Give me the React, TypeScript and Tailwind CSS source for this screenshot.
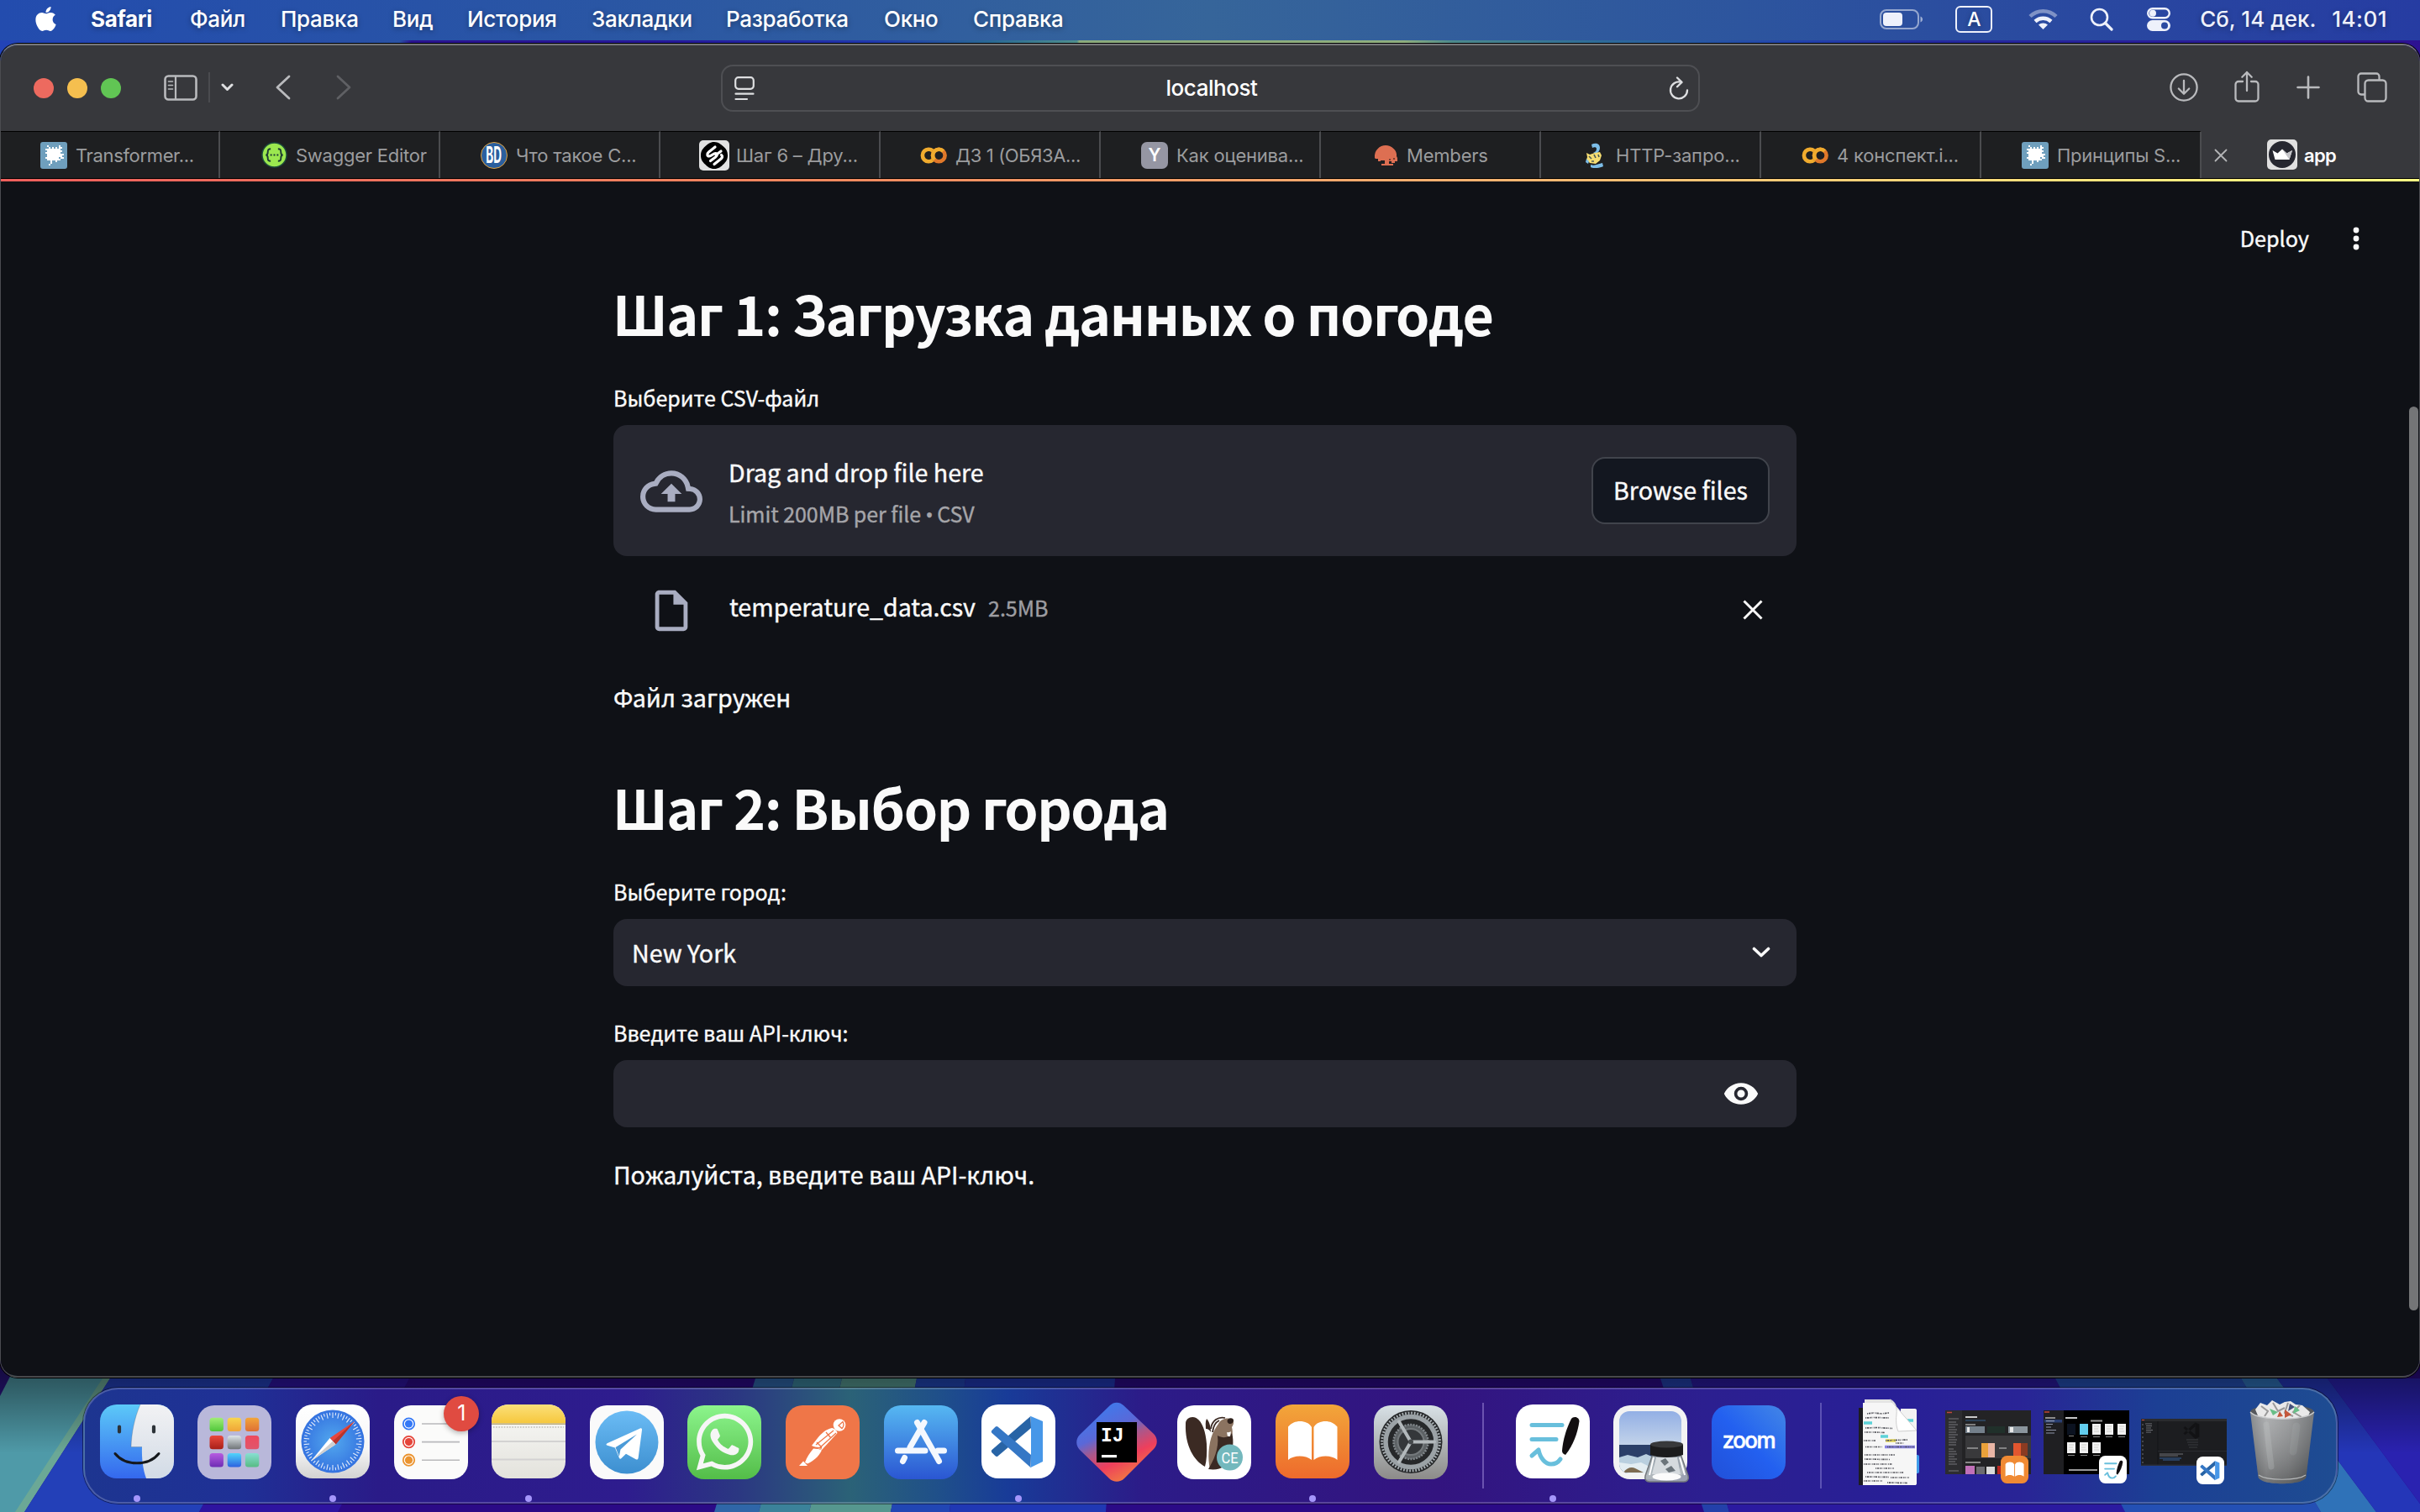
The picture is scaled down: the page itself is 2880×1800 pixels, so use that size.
import type { ReactNode } from 'react';
import { FaApple, FaWhatsapp } from 'react-icons/fa';

/* ---------- desktop ---------- */

function Wallpaper() {
  return (
    <svg className="absolute inset-0 h-full w-full" viewBox="0 0 2880 1800" preserveAspectRatio="none">
      <defs>
        <linearGradient id="wpTop" x1="0" x2="1" y1="0" y2="0">
          <stop offset="0" stopColor="#2243b8" />
          <stop offset="0.165" stopColor="#2a52a4" />
          <stop offset="0.17" stopColor="#2a128e" />
          <stop offset="0.28" stopColor="#25189a" />
          <stop offset="0.36" stopColor="#2038ae" />
          <stop offset="0.41" stopColor="#2a6a94" />
          <stop offset="0.445" stopColor="#4f8f8e" />
          <stop offset="0.446" stopColor="#8bab7c" />
          <stop offset="0.58" stopColor="#8fae7e" />
          <stop offset="0.6" stopColor="#4d8a8c" />
          <stop offset="0.66" stopColor="#2e6c98" />
          <stop offset="0.74" stopColor="#2244ae" />
          <stop offset="0.8" stopColor="#252aa0" />
          <stop offset="1" stopColor="#2d1191" />
        </linearGradient>
        <linearGradient id="wpShade" x1="0" x2="0" y1="0" y2="1">
          <stop offset="0" stopColor="#000" stopOpacity="0.62" />
          <stop offset="0.45" stopColor="#000" stopOpacity="0.35" />
          <stop offset="1" stopColor="#000" stopOpacity="0" />
        </linearGradient>
      </defs>
      <rect width="2880" height="1800" fill="#2b0a86" />
      <rect width="2880" height="110" fill="url(#wpTop)" />
      <polygon points="0,1600 40,1600 0,1690" fill="#2a1580" />
      <polygon points="32,1600 150,1600 29,1800 0,1800 0,1662" fill="#4f9aa8" />
      <polygon points="122,1641 131,1641 29,1800 18,1800" fill="#6ba896" />
      <polygon points="131,1641 325,1641 237,1800 29,1800" fill="#2340b8" />
      <polygon points="325,1641 487,1641 402,1800 237,1800" fill="#2e14a0" />
      <polygon points="899,1641 945,1641 903,1800 850,1800" fill="#2f66a8" />
      <polygon points="945,1641 1002,1641 963,1800 903,1800" fill="#3b829a" />
      <polygon points="1002,1641 1091,1641 1060,1800 963,1800" fill="#56978f" />
      <polygon points="1091,1641 1149,1641 1130,1800 1060,1800" fill="#2146b4" />
      <polygon points="1149,1641 1327,1641 1316,1800 1130,1800" fill="#2038b4" />
      <polygon points="1976,1641 2012,1641 2058,1800 2028,1800" fill="#2340aa" />
      <polygon points="2012,1641 2446,1641 2529,1800 2058,1800" fill="#2b1aa0" />
      <polygon points="2446,1641 2667,1641 2762,1800 2529,1800" fill="#2450b4" />
      <polygon points="2667,1641 2710,1641 2828,1800 2762,1800" fill="#2f72b8" />
      <polygon points="2710,1641 2770,1641 2880,1790 2880,1800 2828,1800" fill="#2436b8" />
      <polygon points="2770,1641 2880,1641 2880,1790" fill="#2a22b0" />
      <rect y="1600" width="2880" height="130" fill="url(#wpShade)" />
    </svg>
  );
}

/* ---------- menu bar ---------- */

const MENUS = [
  { label: 'Файл', w: 'w-[108px]' },
  { label: 'Правка', w: 'w-[133px]' },
  { label: 'Вид', w: 'w-[89px]' },
  { label: 'История', w: 'w-[148px]' },
  { label: 'Закладки', w: 'w-[160px]' },
  { label: 'Разработка', w: 'w-[188px]' },
  { label: 'Окно', w: 'w-[106px]' },
  { label: 'Справка', w: 'w-[130px]' },
];

function MenuBar() {
  return (
    <header className="relative flex h-12 shrink-0 items-center bg-[linear-gradient(90deg,#234cae_0%,#2a56a4_25%,#36659a_50%,#2d559e_72%,#263ca2_100%)] pr-[39px] pb-[2px] pl-[39px] font-['Inter'] text-[26px] leading-[46px] font-medium tracking-[-0.3px] whitespace-nowrap text-white [text-shadow:0_2px_6px_rgba(0,0,0,0.35)]">
      <FaApple className="mr-[38px] h-[33px] w-[31px] -translate-y-px" />
      <span className="w-[118px] font-bold">Safari</span>
      {MENUS.map((m) => (
        <span key={m.label} className={m.w}>
          {m.label}
        </span>
      ))}
      <div className="ml-auto flex items-center">
        <svg className="mr-[38px] h-6 w-[52px]" viewBox="0 0 52 24" fill="none">
          <rect x="1" y="1" width="45" height="22" rx="7" stroke="#fff" strokeOpacity="0.5" strokeWidth="2" />
          <rect x="4" y="4" width="23" height="16" rx="4" fill="#eef1fb" />
          <path d="M48.5 8.500c2 .8 2.500 2 2.500 3.500s-.5 2.700-2.500 3.500z" fill="#fff" fillOpacity="0.55" />
        </svg>
        <span className="mr-[43px] flex h-8 w-11 items-center justify-center rounded-[6px] border-[2.500px] border-[#eef1fb] text-[23px] leading-none">
          A
        </span>
        <svg className="mr-[38px] h-[26px] w-[35px]" viewBox="0 0 35 26" fill="none">
          <path d="M2 9.500C10.500 1 24.500 1 33 9.500" stroke="#fff" strokeOpacity="0.4" strokeWidth="4.500" />
          <path d="M8 15.500c5.500-5 13.500-5 19 0" stroke="#eef1fb" strokeWidth="4.500" />
          <path d="M17.500 25l-5.500-5.500c3-2.800 8-2.800 11 0z" fill="#eef1fb" />
        </svg>
        <svg className="mr-[40px] h-7 w-7" viewBox="0 0 28 28" fill="none" stroke="#eef1fb" strokeLinecap="round">
          <circle cx="11.500" cy="11.500" r="9.500" strokeWidth="2.600" />
          <path d="M18.500 18.500l7.500 7.500" strokeWidth="3.200" />
        </svg>
        <svg className="mr-[35px] h-7 w-7" viewBox="0 0 28 28" fill="none">
          <rect x="1.200" y="1.200" width="25.600" height="11" rx="5.500" stroke="#eef1fb" strokeWidth="2.400" />
          <circle cx="7" cy="6.700" r="4" fill="#eef1fb" />
          <rect y="15" width="28" height="13" rx="6.500" fill="#eef1fb" />
          <circle cx="21" cy="21.500" r="4" fill="#2b4aa2" />
        </svg>
        <span className="w-[157px] tracking-[0px] text-[#eef1fb]">Сб, 14 дек.</span>
        <span className="tracking-[0.500px] text-[#eef1fb]">14:01</span>
      </div>
    </header>
  );
}

/* ---------- Safari toolbar ---------- */

function Toolbar() {
  return (
    <div className="flex h-[102px] shrink-0 items-center bg-[#37383c] pr-[38px] pb-[2px] pl-[39px]">
      <div className="flex gap-4 pt-[2px]">
        <span className="size-6 rounded-full bg-[#ed6a5f]" />
        <span className="size-6 rounded-full bg-[#f5bf4f]" />
        <span className="size-6 rounded-full bg-[#61c554]" />
      </div>
      <svg className="ml-[51px] h-[31px] w-10" viewBox="0 0 40 31" fill="none" stroke="#b9babd">
        <rect x="1.500" y="1.500" width="37" height="28" rx="4" strokeWidth="2.600" />
        <path d="M14 2v27" strokeWidth="2.200" />
        <path d="M5.500 8h5M5.500 12.500h5M5.500 17h5" strokeWidth="1.600" strokeLinecap="round" />
      </svg>
      <span className="ml-[13px] h-9 w-[2px] bg-[#4a4b4f]" />
      <svg className="ml-[13px] h-[10px] w-[15px]" viewBox="0 0 15 10" fill="none" stroke="#dedfe1" strokeWidth="3" strokeLinecap="round" strokeLinejoin="round">
        <path d="M2 2l5.500 5.500L13 2" />
      </svg>
      <svg className="ml-[50px] h-[30px] w-[18px]" viewBox="0 0 18 30" fill="none" stroke="#b9babd" strokeWidth="2.800" strokeLinecap="round" strokeLinejoin="round">
        <path d="M16 2L2 15l14 13" />
      </svg>
      <svg className="ml-[54px] h-[30px] w-[18px]" viewBox="0 0 18 30" fill="none" stroke="#5f6064" strokeWidth="2.800" strokeLinecap="round" strokeLinejoin="round">
        <path d="M2 2l14 13L2 28" />
      </svg>
      <div className="mt-[2px] ml-[440px] flex h-14 w-[1165px] items-center justify-between rounded-[14px] border-2 border-[#4e4f53] pr-[11px] pl-[14px]">
        <svg className="h-[29px] w-6" viewBox="0 0 24 29" fill="none" stroke="#dedfe1" strokeWidth="2.200" strokeLinecap="round">
          <rect x="1.200" y="1.200" width="21.600" height="13.600" rx="3.500" />
          <path d="M1.500 20.700h21M1.500 27h13.500" />
        </svg>
        <span className="font-['Inter'] text-[26px] leading-[52px] font-medium tracking-[-0.450px] text-white">localhost</span>
        <svg className="h-[29px] w-6" viewBox="0 0 24 29" fill="none" stroke="#dedfe1" strokeWidth="2.300" strokeLinecap="round" strokeLinejoin="round">
          <path d="M14.500 6.700A10 10 0 1 0 22 16.300" />
          <path d="M10 1.500l5.500 5.400-5.500 5.400" />
        </svg>
      </div>
      <div className="ml-auto flex items-center text-[#b9babd]">
        <svg className="mr-[43px] size-[34px]" viewBox="0 0 34 34" fill="none" stroke="currentColor" strokeWidth="2.300" strokeLinecap="round" strokeLinejoin="round">
          <circle cx="17" cy="17" r="15.600" />
          <path d="M17 9v15.500M10.800 18.500l6.200 6.200 6.200-6.200" />
        </svg>
        <svg className="mr-[44px] h-[38px] w-[30px] -translate-y-px" viewBox="0 0 30 38" fill="none" stroke="currentColor" strokeWidth="2.300" strokeLinecap="round" strokeLinejoin="round">
          <path d="M10 13H5a3.500 3.500 0 0 0-3.500 3.500V33A3.500 3.500 0 0 0 5 36.500h20a3.500 3.500 0 0 0 3.500-3.500V16.500A3.500 3.500 0 0 0 25 13h-5" />
          <path d="M15 24V2M9.300 7.700L15 2l5.700 5.700" />
        </svg>
        <svg className="mr-[44px] size-7" viewBox="0 0 28 28" stroke="currentColor" strokeWidth="2.600" strokeLinecap="round">
          <path d="M14 1.500v25M1.500 14h25" />
        </svg>
        <svg className="size-[36px]" viewBox="0 0 36 36" fill="none" stroke="currentColor" strokeWidth="2.300" strokeLinejoin="round">
          <rect x="9.500" y="9.500" width="25" height="25" rx="4" />
          <path d="M9.500 26.500H5A3.500 3.500 0 0 1 1.500 23V5A3.500 3.500 0 0 1 5 1.500h18A3.500 3.500 0 0 1 26.500 5v4.500" />
        </svg>
      </div>
    </div>
  );
}

/* ---------- tab strip ---------- */

function RobotSpark() {
  return (
    <svg className="size-8 shrink-0" viewBox="0 0 32 32">
      <rect width="32" height="32" rx="3" fill="#6f9fbd" />
      <path
        fill="#fff"
        d="M8 4h2v2h2v2h2V6h2v2h2V6h2v2h2V4h2v2h2v2h-2v2h2v2h-2v2h4v2h-2v2h2v2h-4v-2h-2v2h2v2h-4v2h-2v-2h-4v4h-2v2h-2v-2h2v-4H8v-2H6v-2h2v-4H6v-2h2v-2H6V8h4V6H8z"
      />
    </svg>
  );
}

function Swagger() {
  return (
    <svg className="size-[31px] shrink-0" viewBox="0 0 32 32">
      <circle cx="16" cy="16" r="15" fill="#9be84f" stroke="#1d4b3c" strokeWidth="1.500" />
      <path
        d="M11.500 8.500c-3 0-3.500 1-3.500 3.500 0 2.500-.5 4-2.500 4 2 0 2.500 1.500 2.500 4s.5 3.500 3.500 3.500M20.500 8.500c3 0 3.500 1 3.500 3.500 0 2.500.5 4 2.500 4-2 0-2.500 1.500-2.500 4s-.5 3.500-3.500 3.500"
        fill="none"
        stroke="#1c3b33"
        strokeWidth="2"
      />
      <path d="M11 16h2M15 16h2M19 16h2" stroke="#1c3b33" strokeWidth="2" />
    </svg>
  );
}

function BdBadge() {
  return (
    <span className="flex size-8 shrink-0 items-center justify-center rounded-full border border-[#e0a03c] bg-[#2b5f9e] text-[27px] leading-none font-bold text-white">
      <span className="inline-block scale-x-[0.500]">BD</span>
    </span>
  );
}

function Stepik() {
  return (
    <svg className="size-9 shrink-0" viewBox="0 0 36 36">
      <rect width="36" height="36" rx="5" fill="#e2e2e2" />
      <path d="M18 2c5 0 8 3 11 5.500S34 13 34 18s-2 7.500-5 10.500S23 34 18 34s-8-2.500-11-5.500S2 23 2 18s2-7.500 5-10.500S13 2 18 2z" fill="#000" />
      <path
        d="M19 8l-7.500 6c-2.500 2-2 5 .5 5s5-3.500 7.500-3.500 2.500 2.500 0 4.500l-6 4.500M26 13l-6 4.500M26.500 17.500c2 1.500 1 3.500-1 5l-7.500 6"
        fill="none"
        stroke="#fff"
        strokeWidth="3.200"
        strokeLinecap="round"
      />
    </svg>
  );
}

function Colab() {
  return (
    <svg className="h-5 w-8 shrink-0" viewBox="0 0 32 20" fill="none" strokeWidth="4.600">
      <path d="M15 4.500a7.300 7.300 0 1 0 0 11" stroke="#f0ab2e" />
      <circle cx="22.300" cy="10" r="7.300" stroke="#e0782a" />
      <path d="M17.200 15.200A7.300 7.300 0 0 1 27.500 4.800" stroke="#f0ab2e" />
    </svg>
  );
}

function YBadge() {
  return <span className="flex size-8 shrink-0 items-center justify-center rounded-[7px] bg-[#9596a3] text-[21px] leading-none font-semibold text-white">Y</span>;
}

function Mushroom() {
  return (
    <svg className="h-[26px] w-[30px] shrink-0" viewBox="0 0 30 26">
      <path d="M1 16C0 7 7 1 14 1s14 6 13 13l1 2v4h-3v2h-4v-2h-3v3h5v2H9v-2h4v-4H8v1H5v-3H2z" fill="#dd6f52" />
      <path d="M18 18h2M23 17h2" stroke="#5c2f26" strokeWidth="1.500" />
    </svg>
  );
}

function Snake() {
  return (
    <svg className="h-[30px] w-6 shrink-0" viewBox="0 0 24 30">
      <path d="M8 2c5-2.500 10-1 10 4 0 3-2 6-5 7l-3-1c3-1 4-3 4-5s-3-2-5-1z" fill="#7cbde8" />
      <path d="M2 12l4 2 6-2 6-1 2 4-2 6-5 4-7-1-4-4 1-3z" fill="#f5dd72" />
      <path d="M5 16l3 3m3-5l2 4m3-4l1 3M8 22h3" stroke="#4c5a55" strokeWidth="1.600" />
      <path d="M7 26c5 2 9-1 14-2l1 4c-4 2-11 3-15 1z" fill="#7cbde8" />
      <path d="M2 19l3 3-1 3-3-2z" fill="#7cbde8" />
    </svg>
  );
}

const TABS: { title: string; pad: string; gap: string; track: string; icon: ReactNode }[] = [
  { title: 'Transformer...', pad: 'pl-[47px]', gap: 'gap-[10px]', track: 'tracking-[-0.350px]', icon: <RobotSpark /> },
  { title: 'Swagger Editor', pad: 'pl-[49px]', gap: 'gap-[10px]', track: 'tracking-[-0.250px]', icon: <Swagger /> },
  { title: 'Что такое C...', pad: 'pl-[48px]', gap: 'gap-[10px]', track: 'tracking-[-0.200px]', icon: <BdBadge /> },
  { title: 'Шаг 6 – Дру...', pad: 'pl-[46px]', gap: 'gap-[8px]', track: 'tracking-[-0.200px]', icon: <Stepik /> },
  { title: 'ДЗ 1 (ОБЯЗА...', pad: 'pl-[47px]', gap: 'gap-[10px]', track: 'tracking-[-0.350px]', icon: <Colab /> },
  { title: 'Как оценива...', pad: 'pl-[48px]', gap: 'gap-[10px]', track: 'tracking-[-0.200px]', icon: <YBadge /> },
  { title: 'Members', pad: 'pl-[63px]', gap: 'gap-[9px]', track: 'tracking-[-0.200px]', icon: <Mushroom /> },
  { title: 'HTTP-запро...', pad: 'pl-[52px]', gap: 'gap-[13px]', track: 'tracking-[-0.150px]', icon: <Snake /> },
  { title: '4 конспект.i...', pad: 'pl-[48px]', gap: 'gap-[10px]', track: 'tracking-[-0.200px]', icon: <Colab /> },
  { title: 'Принципы S...', pad: 'pl-[48px]', gap: 'gap-[10px]', track: 'tracking-[-0.250px]', icon: <RobotSpark /> },
];

function TabStrip() {
  return (
    <div className="flex h-[57px] shrink-0 border-b border-black bg-[#37383c] font-['Inter'] text-[22px]">
      {TABS.map((t, i) => (
        <div
          key={i}
          className={`flex w-[262px] shrink-0 items-center overflow-hidden border-t border-r-2 border-t-black border-r-[#4b4c4f] bg-[#1e1f21] whitespace-nowrap text-[#9b9c9e] first:w-[261px] ${t.pad} ${t.gap}`}
        >
          {t.icon}
          <span className={`pt-[2px] ${t.track}`}>{t.title}</span>
        </div>
      ))}
      <div className="flex grow items-center pl-[15px]">
        <svg className="mt-[2px] size-4" viewBox="0 0 16 16" stroke="#b3b4b6" strokeWidth="1.800" strokeLinecap="round">
          <path d="M1.500 1.500l13 13M14.500 1.500l-13 13" />
        </svg>
        <svg className="ml-[47px] size-9" viewBox="0 0 36 36">
          <rect width="36" height="36" rx="5" fill="#e0e0e0" />
          <circle cx="18" cy="18" r="16" fill="#262730" />
          <path d="M6.500 13l6 3.500 5.500-5 5.500 5 6.500-3.500L26.500 24H9.500z" fill="#fff" />
          <path d="M18 11.500l5.500 5 6.500-3.500L26.500 24z" fill="#c4c4c8" />
        </svg>
        <span className="ml-2 pt-[2px] font-semibold tracking-[-0.700px] text-white">app</span>
      </div>
    </div>
  );
}

/* ---------- page ---------- */

function Uploader() {
  return (
    <div className="mt-[13px] flex h-[156px] items-center rounded-2xl bg-[#262730] px-8">
      <svg className="mt-[2px] size-[74px]" viewBox="0 0 24 24" fill="#a9adc1">
        <path d="M19.350 10.040A7.490 7.490 0 0 0 12 4C9.110 4 6.600 5.640 5.350 8.040A5.994 5.994 0 0 0 0 14c0 3.310 2.690 6 6 6h13c2.760 0 5-2.240 5-5 0-2.640-2.050-4.780-4.650-4.960zM19 18H6c-2.210 0-4-1.790-4-4 0-2.050 1.530-3.760 3.560-3.970l1.070-.11.5-.95A5.469 5.469 0 0 1 12 6c2.620 0 4.880 1.860 5.390 4.430l.3 1.500 1.530.11A2.980 2.980 0 0 1 22 15c0 1.650-1.350 3-3 3zM8 13h2.550v3h2.900v-3H16l-4-4z" />
      </svg>
      <div className="ml-[31px] grow">
        <p className="text-[28.600px] leading-[56px]">Drag and drop file here</p>
        <p className="text-[25px] leading-[43px] tracking-[-0.050px] text-[#a5a5a9]">
          Limit 200MB per file <span className="font-['Noto_Sans'] text-[24px] tracking-[-1px]">•</span> CSV
        </p>
      </div>
      <button className="h-20 w-[212px] rounded-2xl border-2 border-[#41444c] bg-[#131720] pb-[2px] text-[28.600px] leading-[72px]">
        Browse files
      </button>
    </div>
  );
}

function UploadedFile() {
  return (
    <div className="mt-9 flex h-[58px] items-center">
      <svg className="ml-10 size-[58px]" viewBox="0 0 24 24" fill="#a9adc1">
        <path d="M14 2H6c-1.100 0-1.990.9-1.990 2L4 20c0 1.100.89 2 1.990 2H18c1.100 0 2-.9 2-2V8l-6-6zM6 20V4h7v5h5v11H6z" />
      </svg>
      <p className="mb-[10px] ml-[40px] flex items-baseline gap-[15px] leading-[46px]">
        <span className="text-[28.600px]">temperature_data.csv</span>
        <span className="text-[25px] text-[#9d9da1]">2.5MB</span>
      </p>
      <svg className="mr-[40px] mb-[2px] ml-auto size-6" viewBox="0 0 24 24" stroke="#fafafa" strokeWidth="3">
        <path d="M1.500 1.500l21 21M22.500 1.500l-21 21" />
      </svg>
    </div>
  );
}

function Page() {
  return (
    <main className="relative grow bg-[#0f1116] font-['Noto_Sans_CJK_SC',sans-serif] text-[#fafafa] [-webkit-text-stroke:0.4px]">
      <div className="flex h-[116px] justify-end pt-[47px] pr-[70px]">
        <span className="h-10 text-[25.200px] leading-10">Deploy</span>
        <svg className="mt-[7px] ml-[51px] h-7 w-[10px]" viewBox="0 0 10 28" fill="#fafafa">
          <circle cx="5" cy="4" r="3.400" />
          <circle cx="5" cy="14" r="3.400" />
          <circle cx="5" cy="24" r="3.400" />
        </svg>
      </div>

      <div className="ml-[729px] w-[1408px]">
        <h2 className="-ml-[1px] text-[64.500px] leading-[80px] font-bold tracking-[-1.350px] [-webkit-text-stroke:0px]">Шаг 1: Загрузка данных о погоде</h2>
        <p className="mt-[41px] text-[25px] leading-10">Выберите CSV-файл</p>
        <Uploader />
        <UploadedFile />
        <p className="mt-[49px] text-[28.600px] leading-[50px]">Файл загружен</p>

        <h2 className="mt-[65px] -ml-[1px] text-[64.500px] leading-[80px] font-bold tracking-[-1.400px] [-webkit-text-stroke:0px]">Шаг 2: Выбор города</h2>
        <p className="mt-[41px] text-[25px] leading-10">Выберите город:</p>
        <div className="mt-[13px] flex h-20 items-center justify-between rounded-2xl bg-[#262730] pr-[31px] pl-[22px]">
          <span className="text-[28.600px] leading-[60px]">New York</span>
          <svg className="mb-[1px] h-[13px] w-[22px]" viewBox="0 0 22 13" fill="none" stroke="#fafafa" strokeWidth="3.600" strokeLinecap="round" strokeLinejoin="round">
            <path d="M2.500 2.500L11 10.500l8.500-8" />
          </svg>
        </div>
        <p className="mt-[35px] text-[25px] leading-10">Введите ваш API-ключ:</p>
        <div className="mt-[13px] flex h-20 items-center justify-end rounded-2xl bg-[#262730] pr-11">
          <svg className="size-11" viewBox="0 0 24 24" fill="#fafafa">
            <path d="M12 5C7 5 2.700 8 1 12c1.700 4 6 7 11 7s9.300-3 11-7c-1.700-4-6-7-11-7zm0 11.500a4.500 4.500 0 1 1 0-9 4.500 4.500 0 0 1 0 9zm0-7a2.500 2.500 0 1 0 0 5 2.500 2.500 0 0 0 0-5z" />
          </svg>
        </div>
        <p className="mt-[31px] text-[28.600px] leading-[50px]">Пожалуйста, введите ваш API-ключ.</p>
      </div>

      <span className="absolute top-[268px] right-[1px] h-[1076px] w-[11px] rounded-full bg-[#747577]" />
    </main>
  );
}

function SafariWindow() {
  return (
    <section className="relative mt-1 flex h-[1588px] shrink-0 flex-col overflow-hidden rounded-[21px] border-x border-t-2 border-b-2 border-x-[#4b4c50] border-t-[#77787b] border-b-[#48494c] shadow-[0_0_0_1px_#000]">
      <Toolbar />
      <TabStrip />
      <div className="h-[3px] shrink-0 bg-[linear-gradient(90deg,#ee5f5c_0%,#f08a5f_35%,#f5b070_60%,#ffff84_100%)]" />
      <Page />
    </section>
  );
}

/* ---------- dock ---------- */

function Art({ children, className = '' }: { children: ReactNode; className?: string }) {
  return (
    <svg className={`size-[88px] overflow-visible ${className}`} viewBox="0 0 88 88">
      {children}
    </svg>
  );
}

function Finder() {
  return (
    <Art>
      <defs>
        <linearGradient id="fiA" x2="0" y2="1">
          <stop stopColor="#5cc9f8" />
          <stop offset="1" stopColor="#3468ee" />
        </linearGradient>
        <linearGradient id="fiB" x2="0" y2="1">
          <stop stopColor="#f2f2f4" />
          <stop offset="1" stopColor="#d2dbe6" />
        </linearGradient>
        <clipPath id="fiC">
          <rect width="88" height="88" rx="20" />
        </clipPath>
      </defs>
      <g clipPath="url(#fiC)">
        <rect width="88" height="88" fill="url(#fiA)" />
        <path d="M48 0C41 16 37.500 34 37 50.500h13C49.500 64 51 77 55 88h33V0z" fill="url(#fiB)" />
        <path d="M48 0C41 16 37.500 34 37 50.500h13" fill="none" stroke="#555" strokeOpacity="0.25" strokeWidth="1" />
      </g>
      <path d="M23 26.500v6M64 26.500v6" stroke="#2c3238" strokeWidth="4.200" strokeLinecap="round" />
      <path d="M18 58.500c12 15 40 15 52 0" fill="none" stroke="#15181c" strokeWidth="3" strokeLinecap="round" />
    </Art>
  );
}

const PAD_COLORS = [
  ['#a2ee78', '#4fc63a'], ['#f8d64e', '#f0a437'], ['#f2a63a', '#de6e34'],
  ['#ea4a3d', '#a81f18'], ['#dfe6ea', '#6f7477'], ['#ee4a5e', '#e0566c'],
  ['#b65be0', '#6e2db4'], ['#4fd4fb', '#2c62e0'], ['#88dfd2', '#57bb84'],
];

function Launchpad() {
  return (
    <Art>
      <rect width="88" height="88" rx="20" fill="#b9b8da" />
      {PAD_COLORS.map(([a, b], i) => (
        <g key={i}>
          <linearGradient id={`lp${i}`} x2="0" y2="1">
            <stop stopColor={a} />
            <stop offset="1" stopColor={b} />
          </linearGradient>
          <rect x={14.5 + (i % 3) * 21.2} y={14.7 + Math.floor(i / 3) * 21.2} width="16.400" height="16.400" rx="3.500" fill={`url(#lp${i})`} />
        </g>
      ))}
    </Art>
  );
}

function Safari() {
  return (
    <Art>
      <defs>
        <linearGradient id="saA" x2="0" y2="1">
          <stop stopColor="#fff" />
          <stop offset="0.6" stopColor="#f6f6f6" />
          <stop offset="1" stopColor="#d2d2d2" />
        </linearGradient>
        <radialGradient id="saB">
          <stop stopColor="#52a8ee" />
          <stop offset="1" stopColor="#3573e0" />
        </radialGradient>
      </defs>
      <rect width="88" height="88" rx="20" fill="url(#saA)" />
      <circle cx="44" cy="44" r="37.500" fill="url(#saB)" />
      {Array.from({ length: 60 }, (_, i) => (
        <path key={i} d={i % 2 ? 'M44 9.500v3.500' : 'M44 9.500v6.500'} stroke="#fff" strokeOpacity="0.85" strokeWidth="1.100" transform={`rotate(${i * 6} 44 44)`} />
      ))}
      <path d="M70 20L40.500 40l7 7.500z" fill="#e8463c" />
      <path d="M70 20L44 43.800l3.500 3.700z" fill="#b8352c" />
      <path d="M18 67.500L40.500 40l7 7.500z" fill="#fff" />
      <path d="M18 67.500L44 43.800l3.500 3.700z" fill="#cfcfcf" />
    </Art>
  );
}

function Reminders() {
  return (
    <Art>
      <rect width="88" height="88" rx="20" fill="#fbfbfa" />
      {['#3478f6', '#e5453a', '#eb9430'].map((c, i) => (
        <g key={c}>
          <circle cx="17.500" cy={22 + i * 21.6} r="6.700" fill="#fff" stroke={c} strokeWidth="1.800" />
          <circle cx="17.500" cy={22 + i * 21.6} r="4.600" fill={c} />
          <path d={`M33 ${22 + i * 21.6}h45`} stroke="#b9b9bb" strokeWidth="1.600" />
        </g>
      ))}
    </Art>
  );
}

function Notes() {
  return (
    <Art>
      <defs>
        <linearGradient id="noA" x2="0" y2="1">
          <stop stopColor="#fbe07a" />
          <stop offset="1" stopColor="#f6c73c" />
        </linearGradient>
        <linearGradient id="noB" x2="0" y2="1">
          <stop stopColor="#fafaf8" />
          <stop offset="1" stopColor="#e3e2dc" />
        </linearGradient>
      </defs>
      <rect width="88" height="88" rx="20" fill="url(#noB)" />
      <path d="M0 22.500V20A20 20 0 0 1 20 0h48a20 20 0 0 1 20 20v2.500z" fill="url(#noA)" />
      <path d="M0 23.300h88" stroke="#b9ab80" strokeWidth="1.600" />
      <path d="M2 27h84" stroke="#c9c8c4" strokeWidth="2" strokeDasharray="1.500 1.700" />
      <path d="M0 44h88M0 65.500h88" stroke="#d3d2d2" strokeWidth="1.800" />
    </Art>
  );
}

function Telegram() {
  return (
    <Art>
      <defs>
        <linearGradient id="teA" x2="0" y2="1">
          <stop stopColor="#6bbcf5" />
          <stop offset="1" stopColor="#3d8fd0" />
        </linearGradient>
      </defs>
      <rect width="88" height="88" rx="20" fill="#fafafa" />
      <circle cx="44" cy="44" r="37.500" fill="url(#teA)" />
      <path d="M20.500 44.500c-1.500.8-1.500 1.800.2 2.400l9 3.200 4.500 12c.7 1.500 1.600 1.700 2.900.5l5.400-5 11.500 7c1.500.8 2.700.2 3-1.600l5.500-33c.3-2-1-2.600-2.700-1.800z" fill="#fff" transform="rotate(-2 44 44)" />
      <path d="M30.500 50L56 34.500 36.500 52.500l-1.700 8.500z" fill="#4b9bd8" />
    </Art>
  );
}

function WhatsApp() {
  return (
    <span className="flex size-[88px] items-center justify-center rounded-[20px] bg-linear-to-b from-[#8cf58c] to-[#53bd48] text-[#f6f6f6]">
      <FaWhatsapp className="size-[77px]" />
    </span>
  );
}

function Postman() {
  return (
    <Art>
      <rect width="88" height="88" rx="20" fill="#ef7648" />
      <circle cx="64" cy="23.500" r="7.300" fill="#fff" />
      <path d="M63 24l5-4.500c1.500 3 1 6-1 8z" fill="#fff" stroke="#ef7648" strokeWidth="1.300" />
      <path d="M55 27c3 .5 6 3 6.500 6L43 53l-4-1.500L31 48l7-9c5-6 10-10.500 17-12z" fill="#fff" />
      <path d="M39 52l4 1.500c-4 8-10 12.500-17 16l-3-1.500c2-6 6-12 10-16.500z" fill="#fff" />
      <path d="M21 66.500l5 5.500H16z" fill="#fff" />
      <path d="M57 30L36 47M60 33L40 51M48 32l6 7M37 44l6 6M31 50l12 1" stroke="#ef7648" strokeWidth="1.300" fill="none" />
    </Art>
  );
}

function AppStore() {
  return (
    <Art>
      <defs>
        <linearGradient id="asA" x2="0" y2="1">
          <stop stopColor="#56b8f2" />
          <stop offset="1" stopColor="#2a56d2" />
        </linearGradient>
      </defs>
      <rect width="88" height="88" rx="20" fill="url(#asA)" />
      <g stroke="#f4f8fe" strokeWidth="7" strokeLinecap="round">
        <path d="M16.500 54H49M64 54h7.500" />
        <path d="M48 20.500L31 50M24.500 62.500l-2 4" />
        <path d="M39.500 20.500L65.500 66.500" />
      </g>
    </Art>
  );
}

function VsMark() {
  return (
    <>
      <path d="M58.500 14L12.500 54c-1 1-1 2 0 3.200l4 4c1 1 2 1 3 .2L59 28z" fill="#2864a6" />
      <path d="M58.500 75L12.500 34c-1-1-1-2 0-3.200l4-4c1-1 2-1 3-.2L59 60z" fill="#3577c5" />
      <path d="M57.500 13.500L73 20v48l-15.500 7.500c1-.8 1.500-2 1.500-3.500V17c0-1.500-.5-2.800-1.500-3.500z" fill="#4797e8" />
    </>
  );
}

function VsCode() {
  return (
    <Art>
      <rect width="88" height="88" rx="20" fill="#fff" />
      <VsMark />
    </Art>
  );
}

function IntelliJ() {
  return (
    <Art>
      <defs>
        <linearGradient id="ijA" x1="0.250" y1="0" x2="0.750" y2="1">
          <stop stopColor="#3a7df0" />
          <stop offset="0.350" stopColor="#5a68d8" />
          <stop offset="0.500" stopColor="#a8588c" />
          <stop offset="0.700" stopColor="#ee3f5c" />
          <stop offset="1" stopColor="#f28a3c" />
        </linearGradient>
      </defs>
      <path d="M36 0c4.500-4.500 11.500-4.500 16 0l36 34c5 5 5 13 0 18L53 87c-5 5-13 5-18 0L0 53c-5-5-5-13 0-18z" fill="url(#ijA)" />
      <rect x="20" y="20" width="48" height="48" />
      <text x="25" y="43" fill="#fff" fontFamily="'Liberation Mono',monospace" fontWeight="700" fontSize="23">
        IJ
      </text>
      <rect x="26" y="59" width="18" height="3.200" fill="#fff" />
    </Art>
  );
}

function DBeaver() {
  return (
    <Art>
      <rect width="88" height="88" rx="20" fill="#fff" />
      <path d="M10 22c0-7 7-9.500 12.500-7C30 19 34 32 35 46c.5 11 0 20-2 27C20 66 9 48 10 22z" fill="#3b2a23" />
      <path d="M35 16c3 3 5 9 5 16-1-2-3-4-6-4 0-4-1-8 1-12z" fill="#3b2a23" />
      <path d="M49 22c3-6 11-8 17-5 2 3 1 6-1 9 2 8 0 14-4 20-10 12-12 18-22 30-3-12-2-30 3-42 2-4 4-8 7-12z" fill="#8b7360" />
      <path d="M61 16c3-1.500 6-.5 6 2 0 3-3 5-6 3.500-2-1.500-2-4 0-5.500z" fill="#2d201b" />
      <path d="M48 36c7 4 14 2 17-3 3 10 1 22-3 30-3 9-10 15-25 13 6-10 13-24 11-40z" fill="#3b2a23" />
      <path d="M40 28c1-10 9-15 17-13M42 32c1-8 4-12 8-14" fill="none" stroke="#3b2a23" strokeWidth="1.800" />
      <path d="M59 32c2 .5 4 0 5-1l-1 6h-3z" fill="#fff" />
      <circle cx="62.500" cy="62" r="15.500" fill="#73b8bd" />
      <text x="62.500" y="69" textAnchor="middle" fill="#fff" fontFamily="Roboto,sans-serif" fontSize="18.500" textLength="20" lengthAdjust="spacingAndGlyphs">
        CE
      </text>
    </Art>
  );
}

function BookMark() {
  return (
    <>
      <path d="M43 27c-3-5-8-7-14-7-5 0-10 2-14 6.500V66c6-5.500 20-6.500 28 0z" fill="#fff" />
      <path d="M45.500 27c3-5 8-7 14-7 5 0 10 2 14 6.500V66c-6-5.500-20-6.500-28 0z" fill="#fff" />
    </>
  );
}

function Books() {
  return (
    <Art>
      <defs>
        <linearGradient id="boA" x2="0" y2="1">
          <stop stopColor="#f2a63a" />
          <stop offset="1" stopColor="#ee6a2c" />
        </linearGradient>
      </defs>
      <rect width="88" height="88" rx="20" fill="url(#boA)" />
      <BookMark />
    </Art>
  );
}

function Settings() {
  return (
    <Art>
      <defs>
        <linearGradient id="seA" x2="0" y2="1">
          <stop stopColor="#d8e1e6" />
          <stop offset="1" stopColor="#8c8b89" />
        </linearGradient>
      </defs>
      <rect width="88" height="88" rx="20" fill="url(#seA)" />
      <circle cx="44" cy="43.500" r="37.500" fill="#26282a" />
      <circle cx="44" cy="43.500" r="34.300" fill="none" stroke="#a9b0b4" strokeWidth="3.200" strokeDasharray="1.800 1.790" />
      <circle cx="44" cy="43.500" r="30" fill="none" stroke="#9ba2a6" strokeWidth="5.500" />
      <circle cx="44" cy="43.500" r="26.500" fill="#26282a" />
      <circle cx="44" cy="43.500" r="20.500" fill="#5d6265" stroke="#82888c" strokeWidth="2.500" strokeDasharray="2 1.400" />
      <circle cx="44" cy="43.500" r="15.500" fill="#34373a" stroke="#74797c" strokeWidth="2" />
      <g stroke="#b2b8bb" strokeWidth="4" strokeLinecap="round">
        <path d="M44 43.500h28M44 43.500L30 19.500M44 43.500L30 67.500" />
      </g>
      <circle cx="44" cy="43.500" r="3" fill="#45494c" />
    </Art>
  );
}

function FreeformMark() {
  return (
    <>
      <path d="M19 24.500h36M19 41.500h29" stroke="#68bfdc" strokeWidth="5" strokeLinecap="round" />
      <path d="M19 61l8-7c2 10 8 17 15 17 5 0 9-3 11-6" stroke="#68bfdc" strokeWidth="5" fill="none" strokeLinecap="round" strokeLinejoin="round" />
      <path d="M66 17c2-3 9-3 9.500 3-2 14-7 28-16.500 40-3-1-4-3-4-5 1-13 5-26 11-38z" fill="#120e10" />
    </>
  );
}

function Freeform() {
  return (
    <Art>
      <rect width="88" height="88" rx="20" fill="#fff" />
      <FreeformMark />
    </Art>
  );
}

function Preview() {
  return (
    <Art>
      <defs>
        <linearGradient id="prA" x2="0" y2="1">
          <stop stopColor="#8aa9e4" />
          <stop offset="1" stopColor="#c4d4ea" />
        </linearGradient>
        <clipPath id="prC">
          <rect x="7" y="7" width="74" height="74" rx="12" />
        </clipPath>
      </defs>
      <rect width="88" height="88" rx="20" fill="#f3f3f3" />
      <g clipPath="url(#prC)">
        <rect width="88" height="48" fill="url(#prA)" />
        <rect y="47" width="88" height="40" fill="#2b3f68" />
        <path d="M7 62l10-3 12 3 10-4 9 4v20H7z" fill="#b9cfdf" />
        <path d="M7 68l14 2 12-2 8 4v10H7z" fill="#e3edf2" />
        <path d="M12 80c4-6 10-7 14-5l10 5z" fill="#7d6b50" />
      </g>
      <path d="M47 58h33l9 26c1 4-1 7-5 7H43c-4 0-6-3-5-7z" fill="#a9b0b6" fillOpacity="0.9" stroke="#73787d" strokeWidth="1.500" />
      <path d="M48 62l-5 21M79 62l6 21" stroke="#fff" strokeWidth="2" />
      <path d="M51 62h25l4 20H46z" fill="#d5dade" />
      <path d="M56 66l6-3 4 5-5 4zM62 76l7-4 5 6-8 2z" fill="#6b747a" />
      <ellipse cx="63.500" cy="85" rx="17" ry="4.500" fill="#fbfbfb" />
      <path d="M44 47h39v12c-10 4-29 4-39 0z" fill="#1c1c1d" />
      <ellipse cx="63.500" cy="46.500" rx="19.500" ry="4" fill="#38393b" />
    </Art>
  );
}

function Zoom() {
  return (
    <span className="flex size-[88px] items-center justify-center rounded-[20px] bg-linear-to-tr from-[#2150d8] via-[#2360f0] to-[#4486e6] pb-[4px] font-['Inter'] text-[26px] leading-none font-medium tracking-[-1.600px] text-white [-webkit-text-stroke:0.5px]">
      zoom
    </span>
  );
}

function PaperStack() {
  return (
    <svg className="h-[106px] w-[78px] overflow-visible" viewBox="0 0 78 106">
      <path d="M9 2h30l12 14v20H9z" fill="#e4e4e4" />
      <rect x="2" y="12" width="7" height="92" fill="#1d1d20" />
      <rect x="69" y="68" width="5" height="22" rx="2" fill="#3f9bea" />
      <path d="M7 6h36l28 32v64c0 1.500-1 2-2 2H7z" fill="#f6f6f6" />
      <path d="M52 13h17c1.500 0 2 1 2 2v25L52 32z" fill="#f2f2f2" />
      <path d="M8 30h10M28 46h9M60 27h7" stroke="#5cd2d8" strokeWidth="3.500" />
      <path d="M34 51h12" stroke="#ecdf5a" strokeWidth="3.500" />
      <path d="M33 58.500h36" stroke="#8983e4" strokeWidth="3.500" />
      <g stroke="#55565c" strokeWidth="1.700" fill="none" strokeDasharray="1 .8 2.500 1 1.500 .7 .8 1.400">
        <path d="M12 19l8-1 9 1 9-1M10 24l10-.5 18 .5M10 36l14-.5 18 1M9 41h12l12 .5M8 51h14M34 51l26-1M46 54h10M10 58.500h20M36 58.500h32M9 68h36M9 73l30 .5M8 79h34M22 84h22M12 89h44M10 94l28 .5M40 95h22M8 99h22M36 101l24 .5" />
      </g>
      <path d="M39 2c6 2 9 8 8 18-1 9 0 15 2 20l22-1z" fill="#fff" stroke="#cfcfcf" strokeWidth="1" />
    </svg>
  );
}

function Badge({ children }: { children: ReactNode }) {
  return (
    <svg className="absolute right-[3px] -bottom-[11px] size-[33px]" viewBox="0 0 88 88">
      {children}
    </svg>
  );
}

function LibraryThumb() {
  return (
    <div className="relative flex h-[76px] w-[102px] bg-[#232325]">
      <svg className="size-full" viewBox="0 0 102 76">
        <rect width="20" height="76" fill="#2d2d30" />
        <path d="M2 2.500h6" stroke="#c2473c" strokeWidth="1.500" />
        <path d="M4 10h12M4 14h9M4 17h11M4 20h8M4 23h10M4 26h9M4 29h11M4 32h8M4 35h10M4 38h9M4 41h9M4 46h6M4 49h9M4 52h10M4 55h7M4 58h10M4 61h8M4 64h10M4 72h12" stroke="#77777b" strokeWidth="1" />
        <path d="M24 8h14" stroke="#ddd" strokeWidth="1.800" />
        <path d="M24 12h24" stroke="#37618a" strokeWidth="1" />
        <path d="M24 17h12" stroke="#bbb" strokeWidth="1.200" />
        <rect x="24" y="19" width="23" height="8" fill="#74808b" />
        <rect x="50" y="19" width="21" height="8" fill="#20302a" />
        <rect x="75" y="19" width="23" height="8" fill="#8b959d" />
        <path d="M26 20h3v6h-3zM77 20h4v6h-4z" fill="#e8e8e8" />
        <rect x="24" y="30" width="78" height="27" fill="#39393b" />
        <path d="M26 45h13M64 45h9" stroke="#ccc" strokeWidth="1.200" />
        <rect x="43" y="39" width="9" height="17" fill="#eba23a" />
        <rect x="51" y="39" width="8" height="17" fill="#e9b5a5" />
        <rect x="81" y="39" width="9" height="15" fill="#e2562f" />
        <rect x="90" y="39" width="8" height="15" fill="#8a3b22" />
        <path d="M24 62h18" stroke="#ccc" strokeWidth="1.200" />
        <rect x="24" y="66" width="11" height="10" fill="#c070b8" />
        <rect x="37" y="67" width="10" height="9" fill="#6c6c70" />
        <rect x="49" y="67" width="10" height="9" fill="#d9d9d9" />
        <rect x="62" y="66" width="10" height="10" fill="#b8261f" />
      </svg>
      <Badge>
        <rect width="88" height="88" rx="20" fill="#f08a33" />
        <BookMark />
      </Badge>
    </div>
  );
}

function BoardsThumb() {
  return (
    <div className="relative flex h-[76px] w-[102px] bg-black">
      <svg className="size-full" viewBox="0 0 102 76">
        <rect width="24" height="76" fill="#1f1f22" />
        <path d="M1 2h6" stroke="#c2473c" strokeWidth="1.500" />
        <path d="M2 9h12" stroke="#bbb" strokeWidth="1.400" />
        <rect x="1" y="11" width="21" height="3.500" fill="#2a3f72" />
        <path d="M3 12.700h10M3 16.500h8M3 20h6M3 23.500h12M3 27h10" stroke="#8d93a5" strokeWidth="1.200" />
        <path d="M26 9h14" stroke="#ddd" strokeWidth="1.800" />
        <path d="M56 12.500h14" stroke="#999" strokeWidth="2" />
        <rect x="28" y="16" width="10" height="13" fill="#0b1220" />
        <rect x="43" y="16" width="10" height="13" fill="#62cdee" />
        {[[58, 16], [73, 16], [88, 16], [28, 38], [43, 38], [58, 38]].map(([x, y]) => (
          <g key={`${x}-${y}`}>
            <rect x={x} y={y} width="10" height="13" fill="#f1f1f1" />
            <path d={`M${x + 2} ${y + 3}h6M${x + 2} ${y + 6}h5M${x + 2} ${y + 9}h6`} stroke="#d0d0cc" strokeWidth="1" />
            <path d={`M${x + 1} ${y + 15.5}h8`} stroke="#888" strokeWidth="1" />
          </g>
        ))}
        <path d="M44 31.500h8M30 30.500h6" stroke="#888" strokeWidth="1" />
        <path d="M30 71h34" stroke="#ccc" strokeWidth="1.400" />
      </svg>
      <Badge>
        <rect width="88" height="88" rx="20" fill="#fff" />
        <FreeformMark />
      </Badge>
    </div>
  );
}

function EditorThumb() {
  return (
    <div className="relative flex h-[78px] w-[102px] items-center">
      <svg className="h-[56px] w-full" viewBox="0 0 102 56">
        <rect width="102" height="56" fill="#1c1d20" />
        <rect width="102" height="3" fill="#2a2b2e" />
        <path d="M1 1.500h3" stroke="#c2473c" strokeWidth="1" />
        <path d="M2 6v48" stroke="#5a5c62" strokeWidth="1.300" strokeDasharray="2 3" />
        <path d="M5 6h8M6 8.500h7M6 11h6M6 13.500h8M6 16h6" stroke="#77797f" strokeWidth="0.900" />
        <path d="M20 3v53" stroke="#111214" strokeWidth="0.800" />
        <g transform="translate(46 0) scale(0.320)" opacity="0.350">
          <path d="M58 14L14 54l6 6 39-32zM58 75L14 34l6-6 39 32zM58 14l15 6v48l-15 7z" fill="#000" />
        </g>
        <path d="M54 25h14M55 28h13M56 31h12M57 34h10" stroke="#3d3f44" strokeWidth="0.900" />
        <path d="M20 38.500h82" stroke="#2e2f33" strokeWidth="0.800" />
        <path d="M22 42h28M22 44h22" stroke="#85878c" strokeWidth="0.800" />
        <path d="M22 47h26M26 49h20" stroke="#3a6aa8" strokeWidth="0.900" />
        <path d="M0 55.200h102" stroke="#2a2f3a" strokeWidth="1.600" />
      </svg>
      <Badge>
        <rect width="88" height="88" rx="20" fill="#fff" />
        <VsMark />
      </Badge>
    </div>
  );
}

function Trash() {
  return (
    <svg className="h-[102px] w-[78px]" viewBox="0 0 78 102">
      <defs>
        <linearGradient id="trA">
          <stop stopColor="#75787b" />
          <stop offset="0.250" stopColor="#a2a4a6" />
          <stop offset="0.600" stopColor="#8d8f91" />
          <stop offset="1" stopColor="#606366" />
        </linearGradient>
        <linearGradient id="trB" x2="0" y2="1">
          <stop stopColor="#fff" stopOpacity="0.150" />
          <stop offset="1" stopColor="#000" stopOpacity="0.300" />
        </linearGradient>
      </defs>
      <ellipse cx="39" cy="15" rx="38" ry="9" fill="#55585c" />
      <path d="M7 12l6-8 8 3 6-6 9 5 6-3 7-1 6 4 8 1 9 8-4 9-28 3-28-3z" fill="#e9e9e9" />
      <path d="M14 8l8 6-4 6M28 4l6 10 8-4M46 4l-4 12 10 4M60 7l-8 8 10 6" fill="none" stroke="#9a9a9a" strokeWidth="2" />
      <path d="M24 11l10 4-6 4zM54 8l6 5-8 4z" fill="#68bf88" />
      <path d="M42 12l8 6-8 4zM36 14l4 6-7 1z" fill="#c4583c" />
      <path d="M48 5l6 4-8 5z" fill="#44527c" />
      <path d="M1 15c10 11 66 11 76 0L67.500 92c-1 11-56 11-57 0z" fill="url(#trA)" />
      <path d="M1 15c10 11 66 11 76 0L67.500 92c-1 11-56 11-57 0z" fill="url(#trB)" />
      <path d="M1 15c10 11 66 11 76 0" fill="none" stroke="#c8cacc" strokeWidth="1.400" />
      <path d="M11 90c10 7 46 7 56 0" fill="none" stroke="#b8babb" strokeWidth="1.200" />
      <path d="M20 30l6 50" stroke="#c8cacb" strokeOpacity="0.250" strokeWidth="7" strokeLinecap="round" />
      <path d="M56 32l-4 30" stroke="#c8cacb" strokeOpacity="0.120" strokeWidth="9" strokeLinecap="round" />
    </svg>
  );
}

function Slot({ children, running = false, badge }: { children: ReactNode; running?: boolean; badge?: string }) {
  return (
    <div className="relative flex h-full w-[116.600px] shrink-0 flex-col items-center">
      <div className="flex h-[125px] items-center">{children}</div>
      {running && <span className="mt-[2px] size-2 rounded-full bg-[#a596fb]" />}
      {badge && (
        <span className="absolute top-[8px] left-[74px] flex size-[42px] items-center justify-center rounded-full bg-[#e04b41] font-['Inter'] text-[25px] text-white shadow-[0_2px_6px_rgba(0,0,0,0.3)]">
          {badge}
        </span>
      )}
    </div>
  );
}

function Dock() {
  return (
    <footer className="relative mt-3 ml-[99px] flex h-[138px] w-[2683px] shrink-0 rounded-[42px] border-2 border-white/20 bg-[linear-gradient(90deg,#1d3590_0%,#1f3096_7%,#2a1b88_13%,#2e1c8e_24%,#2b3782_29%,#2b6277_34%,#1f4f8a_38%,#183b98_41%,#2c1b88_47%,#33147f_60%,#2c1f90_72%,#281f96_80%,#292496_86%,#1c3f94_92%,#1e4c92_100%)] pl-[3.500px] shadow-[0_0_0_1px_rgba(0,0,0,0.45)]">
      <Slot running><Finder /></Slot>
      <Slot><Launchpad /></Slot>
      <Slot running><Safari /></Slot>
      <Slot badge="1"><Reminders /></Slot>
      <Slot running><Notes /></Slot>
      <Slot><Telegram /></Slot>
      <Slot><WhatsApp /></Slot>
      <Slot><Postman /></Slot>
      <Slot><AppStore /></Slot>
      <Slot running><VsCode /></Slot>
      <Slot><IntelliJ /></Slot>
      <Slot><DBeaver /></Slot>
      <Slot running><Books /></Slot>
      <Slot><Settings /></Slot>
      <span className="mt-4 mr-[23.500px] ml-[27px] h-[102px] w-[2px] shrink-0 bg-[#6b53b0]" />
      <Slot running><Freeform /></Slot>
      <Slot><Preview /></Slot>
      <Slot><Zoom /></Slot>
      <span className="mt-4 mr-[23px] ml-[27px] h-[102px] w-[2px] shrink-0 bg-[#5b52b4]" />
      <Slot><PaperStack /></Slot>
      <Slot><LibraryThumb /></Slot>
      <Slot><BoardsThumb /></Slot>
      <Slot><EditorThumb /></Slot>
      <Slot><Trash /></Slot>
    </footer>
  );
}

export default function App() {
  return (
    <div className="relative flex h-[1800px] w-[2880px] flex-col overflow-hidden">
      <Wallpaper />
      <MenuBar />
      <SafariWindow />
      <Dock />
    </div>
  );
}
